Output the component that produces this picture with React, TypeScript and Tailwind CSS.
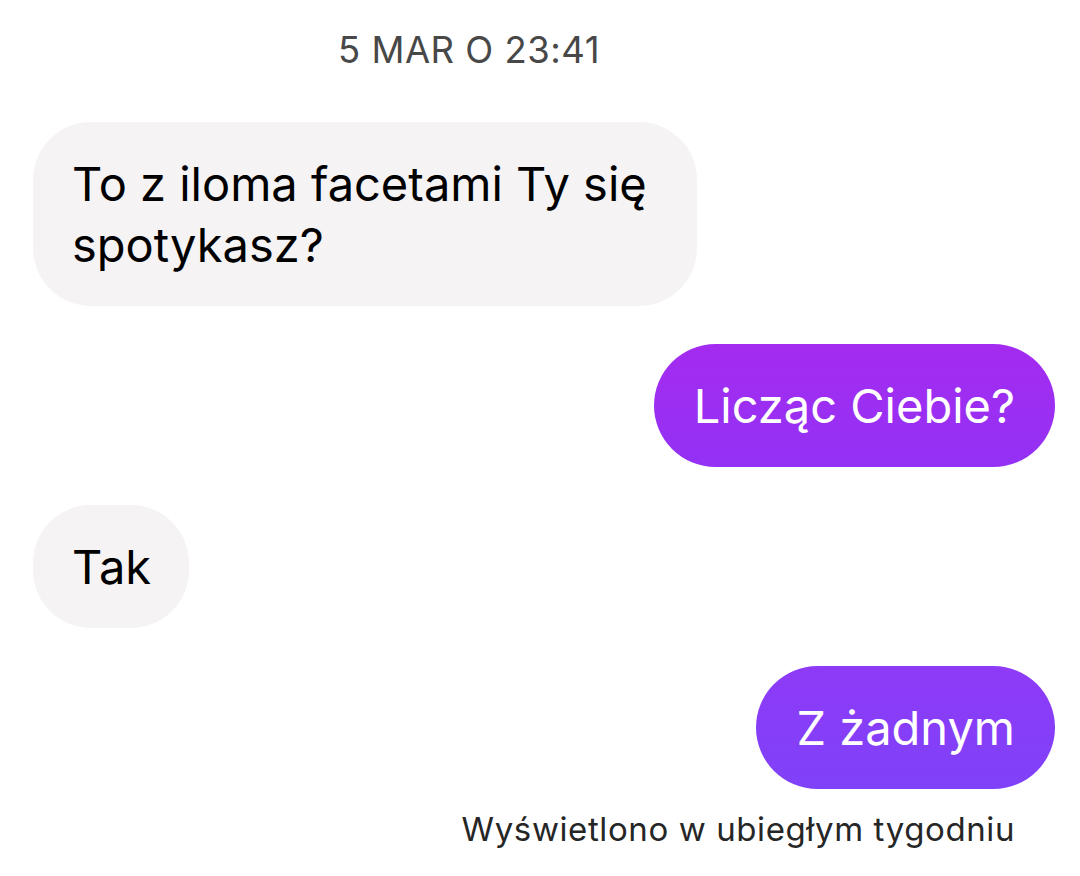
import React from "react";

type Message = {
  id: number;
  text: string;
  mine: boolean;
  color?: string;
};

const messages: Message[] = [
  { id: 1, text: "To z iloma facetami Ty się spotykasz?", mine: false },
  {
    id: 2,
    text: "Licząc Ciebie?",
    mine: true,
    color: "bg-gradient-to-b from-[#a42bf0] to-[#9331f4]",
  },
  { id: 3, text: "Tak", mine: false },
  {
    id: 4,
    text: "Z żadnym",
    mine: true,
    color: "bg-gradient-to-b from-[#8e3af7] to-[#7f41f8]",
  },
];

const App = () => {
  return (
    <div
      className="min-h-[876px] w-[1080px] bg-white pl-[33px] pr-[25px]"
      style={{ fontFamily: "Inter, 'Noto Sans', sans-serif" }}
    >
      <div className="flex h-[102px] items-start justify-center pt-[28px] pr-[150px]">
        <span className="text-[36.5px] leading-[44px] tracking-[0.5px] text-[#484848]">
          5 MAR O 23:41
        </span>
      </div>

      <div className="flex flex-col gap-[38px] pt-[20px]">
        {messages.map((m) =>
          m.mine ? (
            <div key={m.id} className="flex justify-end">
              <div
                className={`${m.color} rounded-full px-[40px] py-[31px] text-[47px] leading-[61px] text-white`}
              >
                {m.text}
              </div>
            </div>
          ) : (
            <div key={m.id} className="flex justify-start">
              <div className="max-w-[664px] rounded-[58px] bg-[#f5f3f4] pl-[39px] pr-[38px] py-[31px] text-[47px] leading-[61px] text-black">
                {m.text}
              </div>
            </div>
          )
        )}
      </div>

      <div className="flex justify-end pt-[20px] pr-[40px]">
        <span className="text-[33px] leading-[40px] tracking-[0.6px] text-[#262626]">
          Wyświetlono w ubiegłym tygodniu
        </span>
      </div>
    </div>
  );
};

export default App;
